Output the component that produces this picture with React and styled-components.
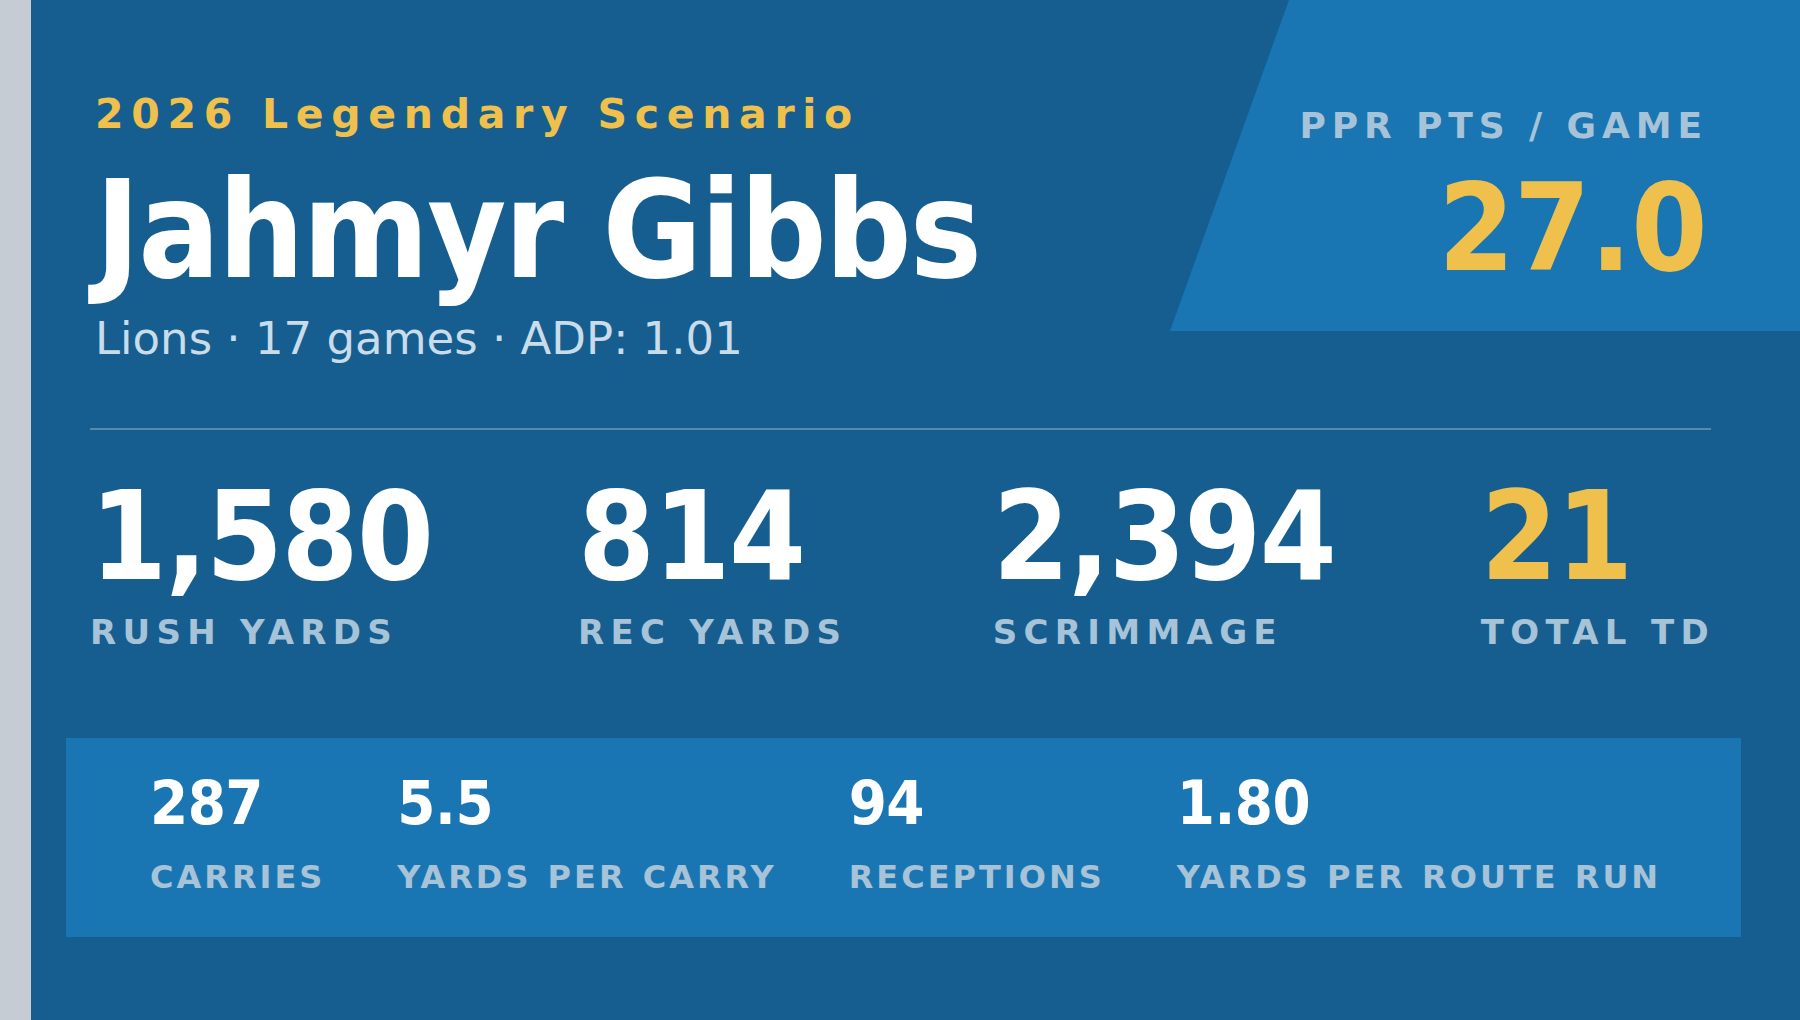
import React from 'react';
import styled, { createGlobalStyle } from 'styled-components';

/* -------------------------------------------------------------------------- */
/*                                   Theme                                    */
/* -------------------------------------------------------------------------- */
const NAVY = '#165e8f';
const BLUE = '#1a76b2';
const GOLD = '#f0c04c';
const MUTED = '#a7c3d8';
const SOFT = '#c8dcea';

const SANS = '"DejaVu Sans", "Liberation Sans", sans-serif';
const CONDENSED = '"DejaVu Sans Condensed", "DejaVu Sans", "Liberation Sans", sans-serif';

const GlobalStyle = createGlobalStyle`
	html, body {
		margin: 0;
		padding: 0;
		background: #c6ccd3;
	}
	body {
		font-family: ${SANS};
	}
`;

/* ---------------------------------- Data ---------------------------------- */
const mainStats = [
	{ value: '1,580', label: 'Rush Yards' },
	{ value: '814', label: 'Rec Yards' },
	{ value: '2,394', label: 'Scrimmage' },
	{ value: '21', label: 'Total TD', accent: true },
];

const bandStats = [
	{ value: '287', label: 'Carries' },
	{ value: '5.5', label: 'Yards Per Carry' },
	{ value: '94', label: 'Receptions' },
	{ value: '1.80', label: 'Yards Per Route Run' },
];

const App = () => (
	<>
		<GlobalStyle />
		<Page>
			<Gutter />
			<Card>
				<Header>
					<Intro>
						<Eyebrow>2026 Legendary Scenario</Eyebrow>
						<PlayerName>Jahmyr Gibbs</PlayerName>
						<Meta>Lions · 17 games · ADP: 1.01</Meta>
					</Intro>
					<ScorePanel>
						<ScoreLabel>PPR PTS / GAME</ScoreLabel>
						<ScoreValue>27.0</ScoreValue>
					</ScorePanel>
				</Header>

				<Divider />

				<StatRow>
					{mainStats.map((s) => (
						<Stat key={s.label}>
							<BigNumber $accent={s.accent}>{s.value}</BigNumber>
							<StatLabel>{s.label}</StatLabel>
						</Stat>
					))}
				</StatRow>

				<Band>
					{bandStats.map((s) => (
						<BandItem key={s.label}>
							<BandValue>{s.value}</BandValue>
							<BandLabel>{s.label}</BandLabel>
						</BandItem>
					))}
				</Band>
			</Card>
		</Page>
	</>
);

/* --------------------------------- Layout --------------------------------- */
const Page = styled.div`
	display: flex;
	width: 1800px;
	height: 1020px;
	overflow: hidden;
`;

const Gutter = styled.div`
	flex: 0 0 31px;
	background: #c6ccd3;
`;

const Card = styled.main`
	flex: 1;
	display: flex;
	flex-direction: column;
	background: ${NAVY};
	padding: 0 89px 0 59px;
	overflow: hidden;
`;

const Header = styled.header`
	display: flex;
	justify-content: space-between;
	align-items: flex-start;
`;

const Intro = styled.div`
	display: flex;
	flex-direction: column;
	align-items: flex-start;
	padding: 94px 0 0 5px;
`;

const Eyebrow = styled.div`
	font-family: ${SANS};
	font-weight: 700;
	font-size: 41px;
	line-height: 1;
	letter-spacing: 7.7px;
	color: ${GOLD};
`;

const PlayerName = styled.h1`
	margin: 28px 0 0;
	font-family: ${CONDENSED};
	font-stretch: condensed;
	font-weight: 700;
	font-size: 135px;
	line-height: 1;
	letter-spacing: -2px;
	color: #fff;
`;

const Meta = styled.div`
	margin-top: 18px;
	font-family: ${SANS};
	font-size: 45px;
	line-height: 1;
	color: ${SOFT};
`;

const ScorePanel = styled.aside`
	flex: 0 0 630px;
	height: 331px;
	margin-right: -89px;
	padding: 108px 89px 0 0;
	box-sizing: border-box;
	display: flex;
	flex-direction: column;
	align-items: flex-end;
	background: ${BLUE};
	clip-path: polygon(119px 0, 100% 0, 100% 100%, 0 100%);
`;

const ScoreLabel = styled.div`
	margin-right: 3px;
	font-family: ${SANS};
	font-weight: 700;
	font-size: 36px;
	line-height: 1;
	letter-spacing: 5.9px;
	white-space: nowrap;
	color: ${MUTED};
`;

const ScoreValue = styled.div`
	margin: 23px 4px 0 0;
	font-family: ${CONDENSED};
	font-stretch: condensed;
	font-weight: 700;
	font-size: 122px;
	line-height: 1;
	letter-spacing: -0.5px;
	color: ${GOLD};
`;

const Divider = styled.hr`
	margin: 67px 0 0;
	border: 0;
	height: 2px;
	background: rgba(255, 255, 255, 0.27);
`;

/* ---------------------------------- Stats --------------------------------- */
const StatRow = styled.section`
	display: flex;
	justify-content: space-between;
	margin: 45px -4px 0 0;
`;

const Stat = styled.div`
	display: flex;
	flex-direction: column;
	align-items: flex-start;
`;

const BigNumber = styled.div`
	font-family: ${CONDENSED};
	font-stretch: condensed;
	font-weight: 700;
	font-size: 123px;
	line-height: 1;
	letter-spacing: -1.5px;
	white-space: nowrap;
	color: ${(p) => (p.$accent ? GOLD : '#fff')};
`;

const StatLabel = styled.div`
	margin-top: 17px;
	font-family: ${SANS};
	font-weight: 700;
	font-size: 34px;
	line-height: 1;
	letter-spacing: 6.3px;
	text-transform: uppercase;
	white-space: nowrap;
	color: ${MUTED};
`;

/* ---------------------------------- Band ---------------------------------- */
const Band = styled.section`
	display: flex;
	gap: 72px;
	margin: 89px -30px 0 -24px;
	padding: 34px 84px 44px;
	background: ${BLUE};
`;

const BandItem = styled.div`
	flex: 0 0 auto;
	display: flex;
	flex-direction: column;
	align-items: flex-start;
`;

const BandValue = styled.div`
	font-family: ${CONDENSED};
	font-stretch: condensed;
	font-weight: 700;
	font-size: 61px;
	line-height: 1;
	letter-spacing: -0.5px;
	color: #fff;
`;

const BandLabel = styled.div`
	margin-top: 28px;
	font-family: ${SANS};
	font-weight: 700;
	font-size: 32px;
	line-height: 1;
	letter-spacing: 3px;
	word-spacing: 2px;
	text-transform: uppercase;
	white-space: nowrap;
	color: ${MUTED};
`;

export default App;
